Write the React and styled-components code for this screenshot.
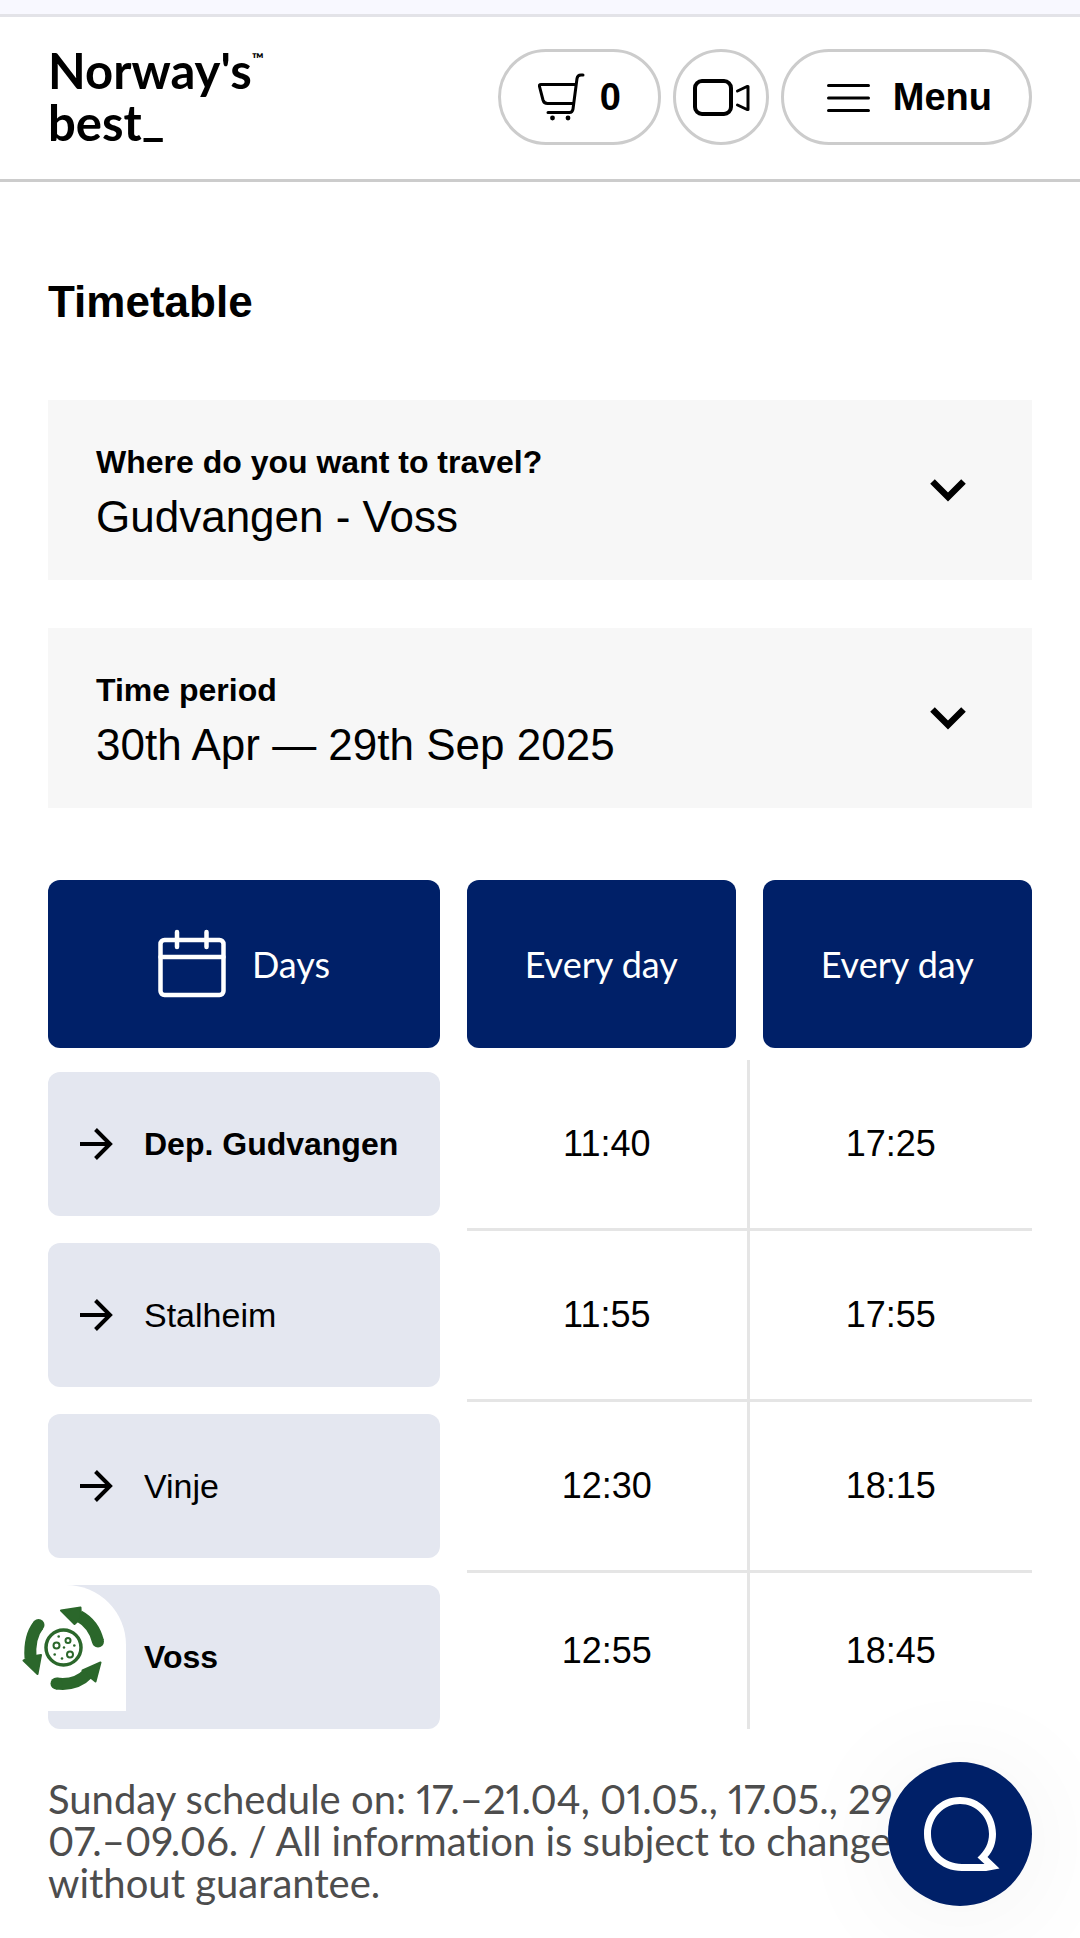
import React from "react";
import styled, { createGlobalStyle } from "styled-components";

const columns = ["Every day", "Every day"];

const stops = [
  { name: "Dep. Gudvangen", times: ["11:40", "17:25"], main: true },
  { name: "Stalheim", times: ["11:55", "17:55"] },
  { name: "Vinje", times: ["12:30", "18:15"] },
  { name: "Voss", times: ["12:55", "18:45"], main: true },
];

const CartIcon = () => (
  <svg width="50" height="48" viewBox="0 0 50 48" fill="none" stroke="#000" strokeWidth="3" strokeLinecap="round" strokeLinejoin="round" aria-hidden="true">
    <path d="M45 2h-2q-3.500 0-4 3.500L35 36q-.5 3.500-3.500 3.500H10" />
    <path d="M37.500 11.500H3q-2 0-1.500 2L5 27q1 3.500 4.500 3.500h26" />
    <circle cx="14.500" cy="45" r="2.400" fill="#000" stroke="none" />
    <circle cx="30" cy="45" r="2.400" fill="#000" stroke="none" />
  </svg>
);

const VideoIcon = () => (
  <svg width="60" height="48" viewBox="0 0 60 48" fill="none" stroke="#000" strokeWidth="4" strokeLinecap="round" strokeLinejoin="round" aria-hidden="true">
    <rect x="4" y="8" width="36" height="33" rx="7" />
    <path d="M46.500 18l9.500-4.500h1v23h-1l-9.500-4.500" strokeWidth="3" />
  </svg>
);

const MenuIcon = () => (
  <svg width="54" height="48" viewBox="0 0 54 48" stroke="#000" strokeWidth="3" strokeLinecap="round" aria-hidden="true">
    <path d="M7.500 12.500h40M7.500 25h40M7.500 37.500h40" />
  </svg>
);

const ChevronIcon = () => (
  <svg width="36" height="24" viewBox="0 0 36 24" fill="none" stroke="#000" strokeWidth="6.500" aria-hidden="true">
    <path d="M2.500 3.500L18 19 33.500 3.500" />
  </svg>
);

const CalendarIcon = () => (
  <svg width="68" height="70" viewBox="0 0 68 70" fill="none" stroke="#fff" strokeWidth="4.500" strokeLinecap="round" aria-hidden="true">
    <rect x="2.500" y="11" width="63" height="55" rx="4" />
    <path d="M2.500 28h63M19 3v15M48.500 3v15" />
  </svg>
);

const ArrowIcon = () => (
  <svg width="34" height="32" viewBox="0 0 34 32" fill="none" stroke="#000" strokeWidth="4" aria-hidden="true">
    <path d="M0 16h30M15.500 1.500L30 16 15.500 30.500" />
  </svg>
);

const CookieIcon = () => (
  <svg width="126" height="126" viewBox="0 0 126 126" fill="none" stroke="#2b672b" aria-hidden="true">
    <g strokeWidth="12" strokeLinecap="butt">
      <path d="M98 56.500C95.500 46 90 37 79 31" />
      <path d="M38.500 40C32 48 29.500 59 30.500 73" />
      <path d="M56.500 98.500C68 100 80 97 88.500 88" />
    </g>
    <g fill="#2b672b" stroke="none">
      <circle cx="98" cy="56.500" r="6" />
      <circle cx="38.500" cy="40" r="6" />
      <circle cx="56.500" cy="98.500" r="6" />
    </g>
    <g fill="#2b672b" strokeWidth="2" strokeLinejoin="round">
      <path d="M61 25.500L80.500 22.500 81 33 74.500 39z" />
      <path d="M23.500 75.500L29 72 41 70 37.500 89z" />
      <path d="M82.500 85.500L100.500 77.500 95.500 96.500 90 92z" />
    </g>
    <circle cx="63.500" cy="62.500" r="17.500" strokeWidth="3.500" />
    <g strokeWidth="2">
      <circle cx="56.500" cy="60.500" r="3" />
      <circle cx="68" cy="55.500" r="2.500" />
      <circle cx="70" cy="69.500" r="3" />
    </g>
    <g fill="#2b672b" stroke="none">
      <circle cx="58.700" cy="51.500" r="1.300" />
      <circle cx="74.300" cy="60.500" r="1.300" />
      <circle cx="64" cy="62.500" r="1.200" />
      <circle cx="54.700" cy="69.500" r="1.300" />
      <circle cx="62" cy="73.500" r="1.300" />
    </g>
  </svg>
);

const ChatIcon = () => (
  <svg width="144" height="144" viewBox="0 0 144 144" fill="#fff" aria-hidden="true">
    <path
      fillRule="evenodd"
      d="M72 35C92 35 108 51 108 72C108 81 105 89 99.500 95L111.500 106.500L98 109H74C53 109 36 93 36 72C36 51 52 35 72 35Z
         M72 42C56 42 43 55 43 72C43 88 56 102 74 102H96.500L89.500 95.500C97 89 101 81 101 72C101 55 88 42 72 42Z"
    />
  </svg>
);

const App = () => {
  return (
    <>
      <GlobalStyle />
      <TopStrip />
      <Header>
        <Logo href="#">
          Norway's<sup>™</sup>
          <br />
          best<span>_</span>
        </Logo>
        <Actions>
          <PillButton type="button" aria-label="Cart, 0 items" $gap={12}>
            <CartIcon />0
          </PillButton>
          <PillButton type="button" aria-label="Webcams" $round>
            <VideoIcon />
          </PillButton>
          <PillButton type="button" $gap={18}>
            <MenuIcon />
            Menu
          </PillButton>
        </Actions>
      </Header>

      <Main>
        <Title>Timetable</Title>
        <Fields>
          <Field>
            <div>
              <label htmlFor="route">Where do you want to travel?</label>
              <select id="route">
                <option>Gudvangen - Voss</option>
              </select>
            </div>
            <ChevronIcon />
          </Field>
          <Field>
            <div>
              <label htmlFor="period">Time period</label>
              <select id="period">
                <option>30th Apr — 29th Sep 2025</option>
              </select>
            </div>
            <ChevronIcon />
          </Field>
        </Fields>

        <Table>
          <thead>
            <tr>
              <th scope="col">
                <HeadTile>
                  <CalendarIcon />
                  Days
                </HeadTile>
              </th>
              {columns.map((label, i) => (
                <th scope="col" key={i}>
                  <HeadTile>{label}</HeadTile>
                </th>
              ))}
            </tr>
          </thead>
          <tbody>
            {stops.map((stop) => (
              <tr key={stop.name}>
                <th scope="row">
                  <StopTile $main={stop.main}>
                    <ArrowIcon />
                    {stop.name}
                  </StopTile>
                </th>
                {stop.times.map((time) => (
                  <td key={time}>{time}</td>
                ))}
              </tr>
            ))}
          </tbody>
        </Table>

        <Note>
          Sunday schedule on: 17.–21.04, 01.05., 17.05., 29.05.,
          <br />
          07.–09.06. / All information is subject to change
          <br />
          without guarantee.
        </Note>
      </Main>

      <CookieButton type="button" aria-label="Cookie settings">
        <CookieIcon />
      </CookieButton>
      <ChatButton type="button" aria-label="Open chat">
        <ChatIcon />
      </ChatButton>
    </>
  );
};

const GlobalStyle = createGlobalStyle`
  * {
    box-sizing: border-box;
  }
  body {
    margin: 0;
    background: #fff;
    color: #000;
    font-family: "Liberation Sans", Arial, sans-serif;
  }
  button {
    font-family: inherit;
    color: inherit;
    cursor: pointer;
  }
  svg {
    display: block;
    flex-shrink: 0;
  }
`;

const TopStrip = styled.div`
  height: 17px;
  background: #f8f8ff;
  border-bottom: 3px solid #e3e3e8;
`;

const Header = styled.header`
  display: flex;
  align-items: flex-start;
  justify-content: space-between;
  padding: 32px 48px 34px;
  background: #fff;
  border-bottom: 3px solid #ccc;
`;

const Logo = styled.a`
  height: 96px;
  margin-top: -5px;
  color: #000;
  text-decoration: none;
  font-family: Lato, sans-serif;
  font-size: 49px;
  font-weight: 700;
  line-height: 52px;
  sup {
    font-size: 16px;
    line-height: 0;
    vertical-align: 24px;
  }
  span {
    line-height: 0;
    vertical-align: 6px;
  }
`;

const Actions = styled.div`
  display: flex;
  gap: 12px;
`;

const PillButton = styled.button`
  display: flex;
  align-items: center;
  justify-content: center;
  gap: ${({ $gap }) => $gap || 0}px;
  height: 96px;
  width: ${({ $round }) => ($round ? "96px" : "auto")};
  padding: 0 ${({ $round }) => ($round ? 0 : 37)}px;
  background: #fff;
  border: 3px solid #ccc;
  border-radius: 48px;
  font-size: 38px;
  font-weight: 700;
`;

const Main = styled.main`
  padding: 94px 48px 32px;
`;

const Title = styled.h2`
  margin: 0 0 72px;
  font-size: 44px;
  line-height: 52px;
  font-weight: 700;
`;

const Fields = styled.div`
  display: flex;
  flex-direction: column;
  gap: 48px;
  margin-bottom: 72px;
`;

const Field = styled.div`
  display: flex;
  align-items: center;
  padding: 36px 66px 36px 48px;
  background: #f7f7f7;
  div {
    flex: 1;
  }
  label {
    display: block;
    font-size: 32px;
    line-height: 52px;
    font-weight: 700;
  }
  select {
    appearance: none;
    display: block;
    width: 100%;
    height: 56px;
    padding: 0;
    border: 0;
    background: transparent;
    color: #000;
    font-family: inherit;
    font-size: 44px;
  }
`;

const Table = styled.table`
  width: 100%;
  table-layout: fixed;
  border-collapse: separate;
  border-spacing: 0;
  font-size: 36px;
  th,
  td {
    padding: 0;
  }
  thead th {
    padding-bottom: 12px;
  }
  th:first-child {
    width: 419px;
    padding-right: 27px;
  }
  thead th:nth-child(2) {
    padding-right: 14px;
  }
  thead th:nth-child(3) {
    padding-left: 13px;
  }
  tbody th {
    padding: 12px 0 15px;
  }
  td {
    text-align: center;
    border-bottom: 3px solid #e5e5e5;
  }
  td:nth-child(2) {
    border-right: 3px solid #e5e5e5;
  }
  tbody tr:last-child th {
    padding-bottom: 0;
  }
  tbody tr:last-child td {
    border-bottom: 0;
  }
`;

const HeadTile = styled.div`
  display: flex;
  align-items: center;
  justify-content: center;
  gap: 26px;
  height: 168px;
  border-radius: 12px;
  background: #002068;
  color: #fff;
  font-family: Lato, sans-serif;
  font-weight: 400;
`;

const StopTile = styled.div`
  display: flex;
  align-items: center;
  gap: 30px;
  height: 144px;
  padding-left: 32px;
  border-radius: 12px;
  background: #e4e7f0;
  font-size: ${({ $main }) => ($main ? 32 : 34)}px;
  font-weight: ${({ $main }) => ($main ? 700 : 400)};
`;

const Note = styled.p`
  margin: 49px 0 0;
  color: #4d4d4d;
  font-family: Lato, sans-serif;
  font-size: 40px;
  line-height: 42px;
  font-variant-ligatures: none;
  font-variant-numeric: proportional-nums;
  white-space: nowrap;
`;

const CookieButton = styled.button`
  position: fixed;
  left: 0;
  bottom: 227px;
  padding: 0;
  border: 0;
  border-radius: 0 60px 0 0;
  background: #fff;
`;

const ChatButton = styled.button`
  position: fixed;
  right: 48px;
  bottom: 32px;
  padding: 0;
  border: 0;
  border-radius: 50%;
  background: #002068;
  box-shadow: 0 8px 120px rgba(0, 0, 0, 0.06);
`;

export default App;
